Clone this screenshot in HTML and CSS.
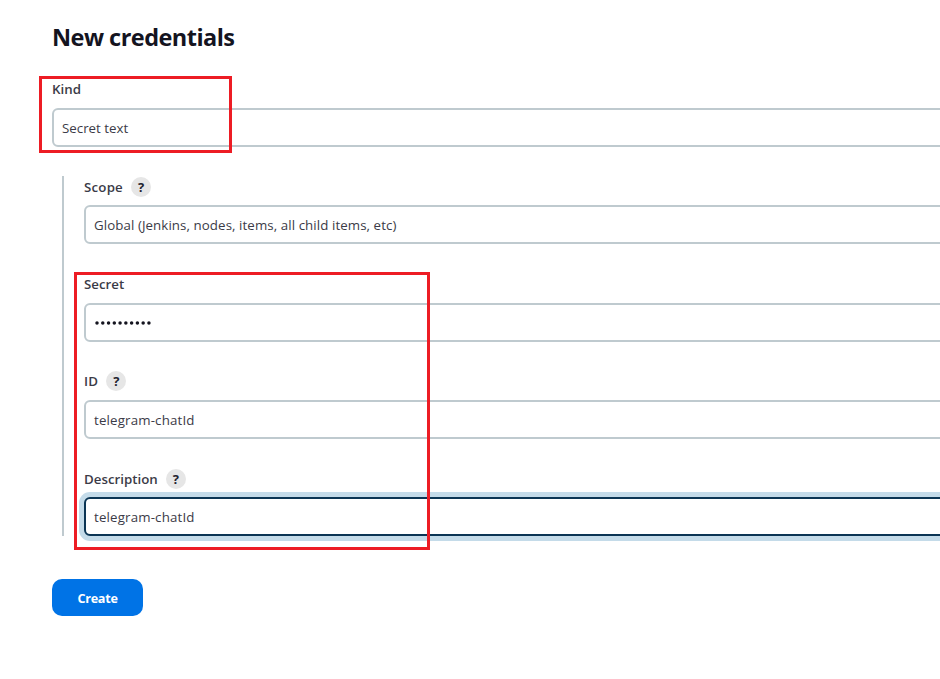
FILE: index.html
```html
<!DOCTYPE html>
<html lang="en">
<head>
<meta charset="utf-8">
<title>New credentials</title>
<link rel="stylesheet" href="styles.css">
</head>
<body>
<main class="page">
  <h1 class="title">New credentials</h1>
  <section class="field">
    <div class="label">Kind</div>
    <div class="control">Secret text</div>
  </section>
  <div class="group">
    <section class="field">
      <div class="label"><span class="scope">Scope</span><span class="help">?</span></div>
      <div class="control"><span class="global">Global (Jenkins, nodes, items, all child items, etc)</span></div>
    </section>
    <section class="field">
      <div class="label">Secret</div>
      <div class="control">
        <svg width="60" height="6" viewBox="0 0 60 6" aria-label="Hidden secret"><path d="M3 3h52.1" fill="none" stroke="#14141f" stroke-width="3.5" stroke-linecap="round" stroke-dasharray="0 5.77"/></svg>
      </div>
    </section>
    <section class="field">
      <div class="label"><span class="id">ID</span><span class="help">?</span></div>
      <div class="control"><span class="chat">telegram-chatId</span></div>
    </section>
    <section class="field">
      <div class="label"><span>Description</span><span class="help">?</span></div>
      <div class="control focused"><span class="chat">telegram-chatId</span></div>
    </section>
  </div>
  <button class="create" type="button">Create</button>
  <div class="mark mark-kind"></div>
  <div class="mark mark-secret"></div>
</main>
</body>
</html>
```
FILE: styles.css
```css
* { box-sizing: border-box; }
body {
  margin: 0;
  background: #fff;
  color: #3b3b47;
  font-family: "Open Sans", "Noto Sans", sans-serif;
  font-size: 13.3px;
}
.page {
  position: relative;
  width: 940px;
  height: 679px;
  padding: 22px 0 0 52px;
  overflow: hidden;
}
.title {
  margin: 0 0 27px;
  height: 30px;
  line-height: 30px;
  font-size: 23.5px;
  font-weight: 700;
  color: #14141f;
  letter-spacing: -0.53px;
}
.label {
  display: flex;
  align-items: center;
  gap: 8px;
  height: 20px;
  margin-bottom: 8.5px;
  font-weight: 600;
  white-space: nowrap;
}
.scope { letter-spacing: 0.2px; }
.id { letter-spacing: 0.3px; }
.help {
  display: flex;
  align-items: center;
  justify-content: center;
  width: 20px;
  height: 20px;
  border-radius: 50%;
  background: #e6e6e6;
  color: #22222e;
  font-size: 13px;
  font-weight: 700;
}
.control {
  display: flex;
  align-items: center;
  width: 1000px;
  height: 39px;
  padding: 1px 0 0 8px;
  border: 2px solid #bfcacf;
  border-radius: 6px;
  background: #fff;
  white-space: nowrap;
}
.global { letter-spacing: 0.08px; }
.chat { letter-spacing: 0.16px; }
.focused {
  border-color: #0b3554;
  box-shadow: 0 0 0 5px #c4dbe9;
}
.group {
  display: flex;
  flex-direction: column;
  gap: 29.8px;
  width: 1010px;
  height: 360.5px;
  margin: 29px 0 0 10px;
  padding: 1.3px 0 0 20px;
  border-left: 2px solid #bfcacf;
}
.create {
  display: flex;
  align-items: center;
  justify-content: center;
  width: 91px;
  height: 36.5px;
  margin-top: 43px;
  padding: 3px 0 0;
  border: 0;
  border-radius: 10px;
  background: #0073e6;
  color: #fff;
  font: 700 12.6px "Open Sans", sans-serif;
  letter-spacing: -0.25px;
}
.mark {
  position: absolute;
  border: 3px solid #ed1c24;
}
.mark-kind { left: 39px; top: 76px; width: 193px; height: 77px; }
.mark-secret { left: 74px; top: 272px; width: 356px; height: 278px; }
```
